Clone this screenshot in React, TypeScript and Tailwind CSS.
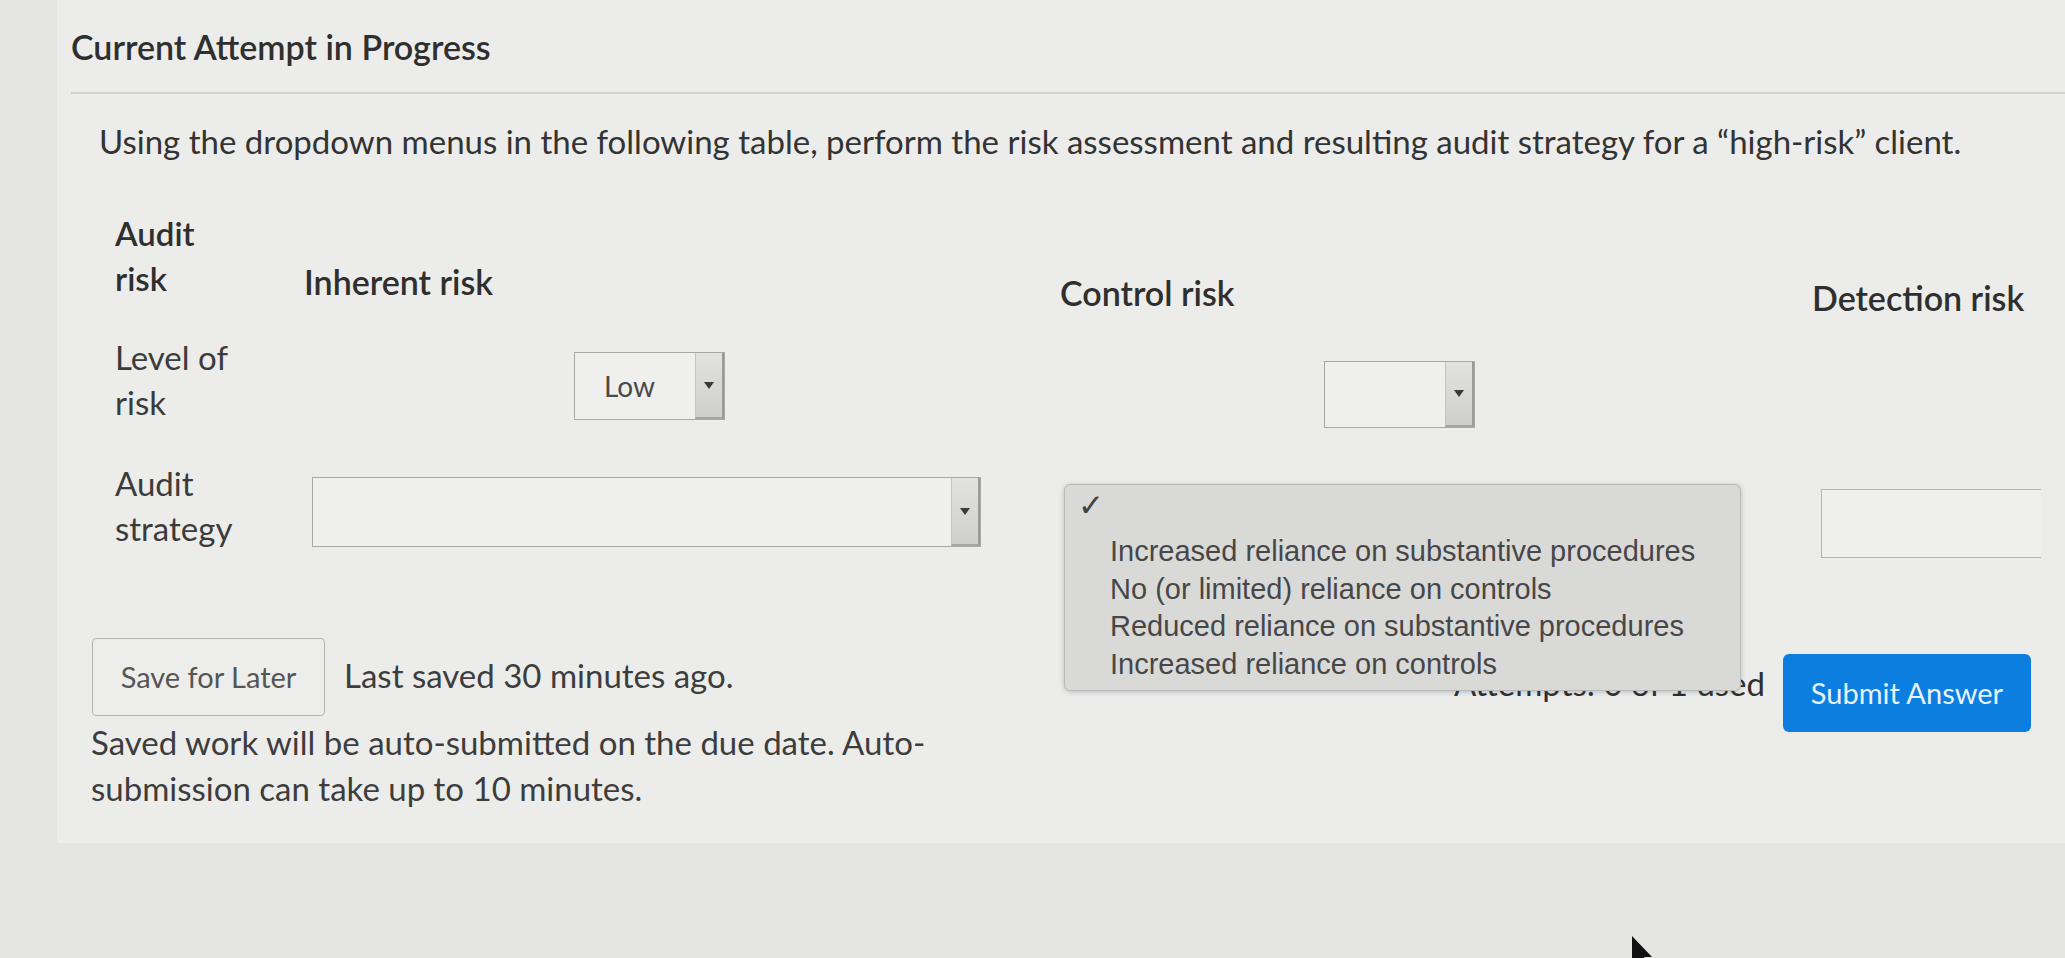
import React from 'react';

const lato = { fontFamily: 'Lato, "Open Sans", sans-serif' };

function SelectBox({ value, className }: { value?: string; className: string }) {
    return (
        <div className={`flex border border-[#a8a8a6] bg-[#efefed] ${className}`}>
            <div className="flex-1 flex items-center pl-[29px] text-[28px] text-[#4a4a4a]">{value}</div>
            <div className="w-[29px] flex items-center justify-center border-l border-[#c4c4c2] bg-gradient-to-b from-[#e2e2e0] to-[#cfcfcd] border-r-2 border-r-[#9a9a98] border-b-2 border-b-[#a5a5a3]">
                <svg width="10" height="7" viewBox="0 0 10 7">
                    <path d="M0 0h10L5 7z" fill="#3a3a3a" />
                </svg>
            </div>
        </div>
    );
}

export default function App() {
    const options = [
        'Increased reliance on substantive procedures',
        'No (or limited) reliance on controls',
        'Reduced reliance on substantive procedures',
        'Increased reliance on controls',
    ];

    return (
        <div className="relative w-[2065px] h-[958px] overflow-hidden bg-[#e4e5e1] text-[#3b3b3b]" style={lato}>
            <div className="ml-[57px] h-[843px] bg-[#ececea] pl-[14px]">
                <div className="pt-[28px] text-[34px] font-semibold text-[#2f2f2f] leading-[38px]">Current Attempt in Progress</div>
                <div className="mt-[26px] border-t-2 border-[#d3d3d0]" />

                <div className="pl-[28px] pt-[25px] text-[33px] leading-[44px] text-[#333]">
                    Using the dropdown menus in the following table, perform the risk assessment and resulting audit strategy for a “high-risk” client.
                </div>

                <div className="ml-[44px] mt-[48px] grid grid-cols-[189px_756px_752px_1fr] text-[33px] leading-[45px]">
                    {/* header row */}
                    <div className="font-semibold text-[#2f2f2f]">
                        Audit
                        <br />
                        risk
                    </div>
                    <div className="self-end mb-[-3px] text-[34px] font-semibold text-[#2f2f2f]">Inherent risk</div>
                    <div className="self-end mb-[-14px] text-[34px] font-semibold text-[#2f2f2f]">Control risk</div>
                    <div className="self-end mb-[-19px] text-[34px] font-semibold text-[#2f2f2f]">Detection risk</div>

                    {/* level of risk */}
                    <div className="mt-[34px]">
                        Level of
                        <br />
                        risk
                    </div>
                    <div className="mt-[51px] pl-[270px]">
                        <SelectBox value="Low" className="w-[151px] h-[68px]" />
                    </div>
                    <div className="mt-[60px] pl-[264px]">
                        <SelectBox className="w-[151px] h-[67px]" />
                    </div>
                    <div />

                    {/* audit strategy */}
                    <div className="mt-[33px]">
                        Audit
                        <br />
                        strategy
                    </div>
                    <div className="mt-[49px] pl-[8px]">
                        <SelectBox className="w-[669px] h-[70px]" />
                    </div>
                    <div className="relative mt-[56px]">
                        <div className="absolute left-[4px] top-0 w-[677px] h-[207px] rounded-[6px] border border-[#b9b9b7] bg-[#d9d9d7] shadow-[0_1px_5px_rgba(60,80,110,0.3)] z-10" style={{ fontFamily: '"Liberation Sans", Arial, sans-serif' }}>
                            <div className="pl-[13px] pt-[4px] text-[31px] leading-[32px] font-bold text-[#444]" style={{ fontFamily: '"DejaVu Sans", sans-serif' }}>✓</div>
                            <div className="pl-[45px] pt-[12px] text-[29px] leading-[37.5px] text-[#474747]">
                                {options.map((o) => (
                                    <div key={o}>{o}</div>
                                ))}
                            </div>
                        </div>
                    </div>
                    <div className="mt-[61px] pl-[9px]">
                        <div className="h-[69px] w-[220px] border border-r-0 border-[#b4b4b2] bg-[#efefed]" />
                    </div>
                </div>

                <div className="ml-[21px] mt-[80px] flex items-start pr-[34px]">
                    <button className="h-[78px] w-[233px] rounded-[4px] border border-[#b3b3b1] bg-[#ededeb] text-[29px] text-[#555]">
                        Save for Later
                    </button>
                    <div className="ml-[19px] mt-[15px] text-[33px] leading-[44px] text-[#3d3d3d]">Last saved 30 minutes ago.</div>
                    <div className="flex-1" />
                    <div className="mt-[23px] mr-[18px] text-[33px] leading-[44px] text-[#2f2f2f]">Attempts: 0 of 1 used</div>
                    <button className="mt-[16px] mb-[-16px] h-[78px] w-[248px] rounded-[6px] bg-[#0b7ee0] text-[29px] text-[#e6f3ff]">
                        Submit Answer
                    </button>
                </div>

                <div className="ml-[20px] mt-[3px] w-[960px] text-[33px] leading-[46px] text-[#3d3d3d]">
                    Saved work will be auto-submitted on the due date. Auto-
                    <br />
                    submission can take up to 10 minutes.
                </div>
            </div>

            <svg className="absolute left-[1630px] top-[936px]" width="22" height="34" viewBox="0 0 22 34">
                <path d="M2 0 L2 30 L9 23 L14 34 L19 32 L14 21 L22 21 Z" fill="#111" />
            </svg>
        </div>
    );
}
